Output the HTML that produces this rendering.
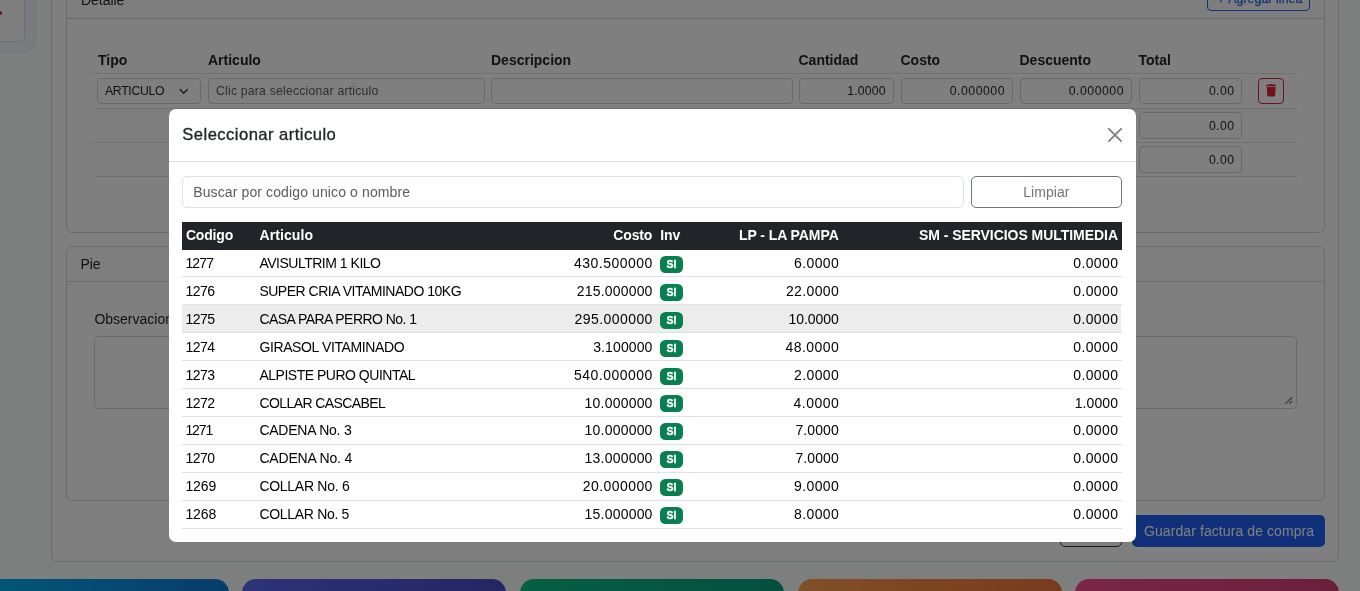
<!DOCTYPE html>
<html lang="es">
<head>
<meta charset="utf-8">
<title>Factura de compra</title>
<style>
*{box-sizing:border-box;margin:0;padding:0}
html,body{width:1360px;height:591px;overflow:hidden}
body{position:relative;font-family:"Liberation Sans",sans-serif;font-size:14px;color:#212529;background:#fbfdfc}
.abs{position:absolute}
.t{position:absolute;white-space:nowrap;line-height:1}
#page{will-change:transform;position:absolute;left:0;top:0;width:1360px;height:591px;overflow:hidden}
.card{position:absolute;background:#fff;border:1px solid #d5d7da;border-radius:6px}
.chead{position:absolute;left:0;right:0;top:0;border-bottom:1px solid #d5d7da;background:#fcfcfc}
.inp{position:absolute;height:26px;border:1px solid #ced4da;border-radius:4px;background:#fff}
.hl{position:absolute;height:1px;background:#dee2e6}
.tile{position:absolute;top:579px;height:40px;width:264px;border-radius:14px}
#ov{position:absolute;left:0;top:0;width:1360px;height:591px;background:rgba(0,0,0,.5)}
#modal{will-change:transform;position:absolute;left:0;top:0;width:1360px;height:591px}
#mbox{position:absolute;left:169px;top:109px;width:967px;height:433px;background:#fff;border-radius:7px}
.rb{position:absolute;left:182px;width:940px;height:1px;background:#dee2e6}
.bdg{position:absolute;left:660px;width:23px;height:17px;border-radius:5.5px;background:#087f50}
</style>
</head>
<body>
<div id="page">
<div class="abs" style="left:-40px;top:-40px;width:65px;height:82px;background:#fff;border:1px solid #c8dcfa;border-radius:5.5px;box-shadow:0 0 0 10px #f2f8ff,0 0 0 11px #e2e8fb"></div>
<div class="abs" style="left:-3px;top:10.8px;width:5.2px;height:4.2px;background:#de243c;border-radius:0 2.5px 2.5px 0"></div>
<div class="card" style="left:51px;top:-40px;width:1288px;height:601.5px"></div>
<div class="card" style="left:66px;top:-24px;width:1259px;height:257px;overflow:hidden"><div class="chead" style="height:42px"></div></div>
<div class="t" id="detalle" style="top:-7.35px;font-size:14px;letter-spacing:-0.049px;left:81px;"><span>Detalle</span></div>
<div class="abs" style="left:1207px;top:-16px;width:103px;height:26.5px;border:1px solid #2260f4;border-radius:4px"></div>
<div class="t" id="plus" style="top:-6.97px;font-size:12.25px;color:#2260f4;left:1217.3px;-webkit-text-stroke:0.25px #2260f4;"><span>+</span></div>
<div class="t" id="agregar" style="top:-7.07px;font-size:12.25px;color:#2260f4;letter-spacing:0.102px;left:1228.2px;-webkit-text-stroke:0.25px #2260f4;"><span>Agregar linea</span></div>
<div class="t" id="h_tipo" style="top:53.45px;font-size:14px;font-weight:bold;left:98px;"><span>Tipo</span></div>
<div class="t" id="h_art" style="top:53.45px;font-size:14px;font-weight:bold;left:208px;"><span>Articulo</span></div>
<div class="t" id="h_desc" style="top:53.45px;font-size:14px;font-weight:bold;left:491px;"><span>Descripcion</span></div>
<div class="t" id="h_cant" style="top:53.45px;font-size:14px;font-weight:bold;left:798.5px;"><span>Cantidad</span></div>
<div class="t" id="h_costo" style="top:53.45px;font-size:14px;font-weight:bold;left:900.5px;"><span>Costo</span></div>
<div class="t" id="h_dcto" style="top:53.45px;font-size:14px;font-weight:bold;left:1019.5px;"><span>Descuento</span></div>
<div class="t" id="h_total" style="top:53.45px;font-size:14px;font-weight:bold;left:1138.5px;"><span>Total</span></div>
<div class="hl" style="left:94px;width:1203px;top:73px"></div>
<div class="hl" style="left:94px;width:1203px;top:108px"></div>
<div class="hl" style="left:94px;width:1203px;top:142px"></div>
<div class="hl" style="left:94px;width:1203px;top:176px"></div>
<div class="inp" style="left:97px;top:78px;width:103.5px"><svg class="abs" style="left:79.5px;top:8.5px" width="12" height="7" viewBox="0 0 12 7"><path d="M2.1 1.5 L5.7 5.2 L9.3 1.5" fill="none" stroke="#343a40" stroke-width="1.4" stroke-linecap="round" stroke-linejoin="round"/></svg></div>
<div class="t" id="sel" style="top:85.03px;font-size:12.25px;letter-spacing:-0.310px;left:105px;"><span>ARTICULO</span></div>
<div class="inp" style="left:208px;top:78px;width:277px"></div>
<div class="t" id="clic" style="top:85.03px;font-size:12.25px;color:#595c5f;letter-spacing:0.196px;left:216px;"><span>Clic para seleccionar articulo</span></div>
<div class="inp" style="left:491px;top:78px;width:301.5px"></div>
<div class="inp" style="left:799px;top:78px;width:95px"></div>
<div class="t" id="n_cant" style="top:85.03px;font-size:12.25px;letter-spacing:0.166px;right:474.334px;"><span>1.0000</span></div>
<div class="inp" style="left:901px;top:78px;width:112px"></div>
<div class="t" id="n_costo" style="top:85.03px;font-size:12.25px;letter-spacing:0.529px;right:354.971px;"><span>0.000000</span></div>
<div class="inp" style="left:1020px;top:78px;width:112px"></div>
<div class="t" id="n_dcto" style="top:85.03px;font-size:12.25px;letter-spacing:0.529px;right:235.971px;"><span>0.000000</span></div>
<div class="inp" style="left:1139px;top:78px;width:103px;height:26px"></div>
<div class="t" id="n_tot0" style="top:85.03px;font-size:12.25px;letter-spacing:0.419px;right:125.581px;"><span>0.00</span></div>
<div class="inp" style="left:1139px;top:112px;width:103px;height:27px"></div>
<div class="t" id="n_tot1" style="top:120.03px;font-size:12.25px;letter-spacing:0.419px;right:125.581px;"><span>0.00</span></div>
<div class="inp" style="left:1139px;top:146px;width:103px;height:27px"></div>
<div class="t" id="n_tot2" style="top:154.03px;font-size:12.25px;letter-spacing:0.419px;right:125.581px;"><span>0.00</span></div>
<div class="abs" style="left:1258px;top:78px;width:26px;height:26px;border:1px solid #de243c;border-radius:4px"><svg class="abs" style="left:6.6px;top:5.2px" width="10.4" height="12.4" preserveAspectRatio="none" viewBox="0 0 448 512"><path fill="#de243c" d="M432 32H312l-9.4-18.7A24 24 0 0 0 281.1 0H166.8a23.72 23.72 0 0 0-21.4 13.3L136 32H16A16 16 0 0 0 0 48v32a16 16 0 0 0 16 16h416a16 16 0 0 0 16-16V48a16 16 0 0 0-16-16zM53.2 467a48 48 0 0 0 47.9 45h245.8a48 48 0 0 0 47.9-45L416 128H32z"/></svg></div>
<div class="card" style="left:66px;top:246px;width:1259px;height:255px;overflow:hidden"><div class="chead" style="height:35px"></div></div>
<div class="t" id="pie" style="top:256.85px;font-size:14px;left:80.4px;"><span>Pie</span></div>
<div class="t" id="obs" style="top:312.25px;font-size:14px;left:94.4px;"><span>Observaciones</span></div>
<div class="abs" style="left:94px;top:336px;width:1203px;height:73px;border:1px solid #d3d8de;border-radius:5px;background:#fff"><svg class="abs" style="left:1188px;top:57px" width="12" height="12" viewBox="0 0 12 12"><path d="M2.2 9.9 L9.1 3.2 M6.2 9.6 L9.1 7.2" stroke="#707070" stroke-width="1.25" fill="none"/></svg></div>
<div class="abs" style="left:1060px;top:515px;width:62px;height:32px;border:1px solid #343a40;border-radius:5px"></div>
<div class="abs" style="left:1132px;top:515px;width:193px;height:32px;background:#2260f4;border-radius:5px"></div>
<div class="t" id="guardar" style="top:523.95px;font-size:14px;color:#fff;letter-spacing:0.084px;left:1144px;"><span>Guardar factura de compra</span></div>
<div class="tile" style="left:-35px;background:linear-gradient(100deg,#04b4ee,#0e78d8)"></div>
<div class="tile" style="left:242.3px;background:linear-gradient(100deg,#5866f0,#4c4bc4)"></div>
<div class="tile" style="left:520px;background:linear-gradient(100deg,#0cc08c,#089e7c)"></div>
<div class="tile" style="left:797.6px;background:linear-gradient(100deg,#ffa04c,#f4743c)"></div>
<div class="tile" style="left:1075.4px;background:linear-gradient(100deg,#f84c8c,#d63e78)"></div>
</div>
<div id="ov"></div>
<div id="modal">
<div id="mbox"></div>
<div class="abs" style="left:169px;top:161px;width:967px;height:1px;background:#dee2e6"></div>
<div class="t" id="mtitle" style="top:126.55px;font-size:16.6px;letter-spacing:0.457px;left:182.3px;-webkit-text-stroke:0.32px #212529;"><span>Seleccionar articulo</span></div>
<svg class="abs" style="left:1108px;top:128px" width="14" height="14" viewBox="0 0 16 16"><path fill="#7f7f7f" d="M.293.293a1 1 0 0 1 1.414 0L8 6.586 14.293.293a1 1 0 1 1 1.414 1.414L9.414 8l6.293 6.293a1 1 0 0 1-1.414 1.414L8 9.414l-6.293 6.293a1 1 0 0 1-1.414-1.414L6.586 8 .293 1.707a1 1 0 0 1 0-1.414z"/></svg>
<div class="abs" style="left:182px;top:176px;width:782px;height:32px;border:1px solid #dee2e6;border-radius:5px"></div>
<div class="t" id="ph" style="top:184.90px;font-size:14px;color:#595c5f;letter-spacing:0.115px;left:193.25px;"><span>Buscar por codigo unico o nombre</span></div>
<div class="abs" style="left:971px;top:176px;width:151px;height:32px;border:1px solid #6c757d;border-radius:5px"></div>
<div class="t" id="limpiar" style="top:184.90px;font-size:14px;color:#6c757d;letter-spacing:0.066px;left:846.333px;width:400px;text-align:center;"><span>Limpiar</span></div>
<div class="abs" style="left:182px;top:222px;width:940px;height:28px;background:#212529"></div>
<div class="t" id="th1" style="top:228.25px;font-size:14px;font-weight:bold;color:#fff;letter-spacing:-0.164px;left:185.9px;"><span>Codigo</span></div>
<div class="t" id="th2" style="top:228.25px;font-size:14px;font-weight:bold;color:#fff;letter-spacing:0.073px;left:259.6px;"><span>Articulo</span></div>
<div class="t" id="th3" style="top:228.25px;font-size:14px;font-weight:bold;color:#fff;letter-spacing:-0.143px;right:707.743px;"><span>Costo</span></div>
<div class="t" id="th4" style="top:228.25px;font-size:14px;font-weight:bold;color:#fff;letter-spacing:-0.067px;left:660.3px;"><span>Inv</span></div>
<div class="t" id="th5" style="top:228.25px;font-size:14px;font-weight:bold;color:#fff;letter-spacing:-0.066px;right:521.266px;"><span>LP - LA PAMPA</span></div>
<div class="t" id="th6" style="top:228.25px;font-size:14px;font-weight:bold;color:#fff;letter-spacing:-0.044px;right:242.044px;"><span>SM - SERVICIOS MULTIMEDIA</span></div>
<div class="t" id="r0c1" style="top:256.15px;font-size:14px;color:#000;letter-spacing:-0.819px;left:185.4px;"><span>1277</span></div>
<div class="t" id="r0c2" style="top:256.15px;font-size:14px;color:#000;letter-spacing:-0.488px;left:259.4px;"><span>AVISULTRIM 1 KILO</span></div>
<div class="t" id="r0c3" style="top:256.15px;font-size:14px;color:#000;letter-spacing:0.503px;right:707.097px;"><span>430.500000</span></div>
<div class="bdg" style="top:256px"></div>
<div class="t" id="r0c4" style="top:258.71px;font-size:10.5px;font-weight:bold;color:#fff;left:471.500px;width:400px;text-align:center;-webkit-text-stroke:0.3px #fff;"><span>SI</span></div>
<div class="t" id="r0c5" style="top:256.15px;font-size:14px;color:#000;letter-spacing:0.394px;right:520.806px;"><span>6.0000</span></div>
<div class="t" id="r0c6" style="top:256.15px;font-size:14px;color:#000;letter-spacing:0.394px;right:241.606px;"><span>0.0000</span></div>
<div class="rb" style="top:276px"></div>
<div class="t" id="r1c1" style="top:284.15px;font-size:14px;color:#000;letter-spacing:-0.519px;left:185.4px;"><span>1276</span></div>
<div class="t" id="r1c2" style="top:284.15px;font-size:14px;color:#000;letter-spacing:-0.491px;left:259.4px;"><span>SUPER CRIA VITAMINADO 10KG</span></div>
<div class="t" id="r1c3" style="top:284.15px;font-size:14px;color:#000;letter-spacing:0.181px;right:707.419px;"><span>215.000000</span></div>
<div class="bdg" style="top:284px"></div>
<div class="t" id="r1c4" style="top:286.71px;font-size:10.5px;font-weight:bold;color:#fff;left:471.500px;width:400px;text-align:center;-webkit-text-stroke:0.3px #fff;"><span>SI</span></div>
<div class="t" id="r1c5" style="top:284.15px;font-size:14px;color:#000;letter-spacing:0.382px;right:520.818px;"><span>22.0000</span></div>
<div class="t" id="r1c6" style="top:284.15px;font-size:14px;color:#000;letter-spacing:0.394px;right:241.606px;"><span>0.0000</span></div>
<div class="rb" style="top:304px"></div>
<div class="abs" style="left:182px;top:305px;width:939px;height:27px;background:#ececec"></div>
<div class="t" id="r2c1" style="top:312.15px;font-size:14px;color:#000;letter-spacing:-0.519px;left:185.4px;"><span>1275</span></div>
<div class="t" id="r2c2" style="top:312.15px;font-size:14px;color:#000;letter-spacing:-0.550px;left:259.4px;"><span>CASA PARA PERRO No. 1</span></div>
<div class="t" id="r2c3" style="top:312.15px;font-size:14px;color:#000;letter-spacing:0.437px;right:707.163px;"><span>295.000000</span></div>
<div class="bdg" style="top:312px"></div>
<div class="t" id="r2c4" style="top:314.71px;font-size:10.5px;font-weight:bold;color:#fff;left:471.500px;width:400px;text-align:center;-webkit-text-stroke:0.3px #fff;"><span>SI</span></div>
<div class="t" id="r2c5" style="top:312.15px;font-size:14px;color:#000;letter-spacing:-0.052px;right:521.252px;"><span>10.0000</span></div>
<div class="t" id="r2c6" style="top:312.15px;font-size:14px;color:#000;letter-spacing:0.394px;right:241.606px;"><span>0.0000</span></div>
<div class="rb" style="top:332px"></div>
<div class="t" id="r3c1" style="top:340.15px;font-size:14px;color:#000;letter-spacing:-0.519px;left:185.4px;"><span>1274</span></div>
<div class="t" id="r3c2" style="top:340.15px;font-size:14px;color:#000;letter-spacing:-0.383px;left:259.4px;"><span>GIRASOL VITAMINADO</span></div>
<div class="t" id="r3c3" style="top:340.15px;font-size:14px;color:#000;letter-spacing:0.113px;right:707.487px;"><span>3.100000</span></div>
<div class="bdg" style="top:340px"></div>
<div class="t" id="r3c4" style="top:342.71px;font-size:10.5px;font-weight:bold;color:#fff;left:471.500px;width:400px;text-align:center;-webkit-text-stroke:0.3px #fff;"><span>SI</span></div>
<div class="t" id="r3c5" style="top:340.15px;font-size:14px;color:#000;letter-spacing:0.465px;right:520.735px;"><span>48.0000</span></div>
<div class="t" id="r3c6" style="top:340.15px;font-size:14px;color:#000;letter-spacing:0.394px;right:241.606px;"><span>0.0000</span></div>
<div class="rb" style="top:360px"></div>
<div class="t" id="r4c1" style="top:368.15px;font-size:14px;color:#000;letter-spacing:-0.519px;left:185.4px;"><span>1273</span></div>
<div class="t" id="r4c2" style="top:368.15px;font-size:14px;color:#000;letter-spacing:-0.487px;left:259.4px;"><span>ALPISTE PURO QUINTAL</span></div>
<div class="t" id="r4c3" style="top:368.15px;font-size:14px;color:#000;letter-spacing:0.503px;right:707.097px;"><span>540.000000</span></div>
<div class="bdg" style="top:368px"></div>
<div class="t" id="r4c4" style="top:370.71px;font-size:10.5px;font-weight:bold;color:#fff;left:471.500px;width:400px;text-align:center;-webkit-text-stroke:0.3px #fff;"><span>SI</span></div>
<div class="t" id="r4c5" style="top:368.15px;font-size:14px;color:#000;letter-spacing:0.394px;right:520.806px;"><span>2.0000</span></div>
<div class="t" id="r4c6" style="top:368.15px;font-size:14px;color:#000;letter-spacing:0.394px;right:241.606px;"><span>0.0000</span></div>
<div class="rb" style="top:388px"></div>
<div class="t" id="r5c1" style="top:396.15px;font-size:14px;color:#000;letter-spacing:-0.519px;left:185.4px;"><span>1272</span></div>
<div class="t" id="r5c2" style="top:396.15px;font-size:14px;color:#000;letter-spacing:-0.579px;left:259.4px;"><span>COLLAR CASCABEL</span></div>
<div class="t" id="r5c3" style="top:396.15px;font-size:14px;color:#000;letter-spacing:0.202px;right:707.398px;"><span>10.000000</span></div>
<div class="bdg" style="top:395px"></div>
<div class="t" id="r5c4" style="top:397.71px;font-size:10.5px;font-weight:bold;color:#fff;left:471.500px;width:400px;text-align:center;-webkit-text-stroke:0.3px #fff;"><span>SI</span></div>
<div class="t" id="r5c5" style="top:396.15px;font-size:14px;color:#000;letter-spacing:0.514px;right:520.686px;"><span>4.0000</span></div>
<div class="t" id="r5c6" style="top:396.15px;font-size:14px;color:#000;letter-spacing:0.094px;right:241.906px;"><span>1.0000</span></div>
<div class="rb" style="top:416px"></div>
<div class="t" id="r6c1" style="top:423.15px;font-size:14px;color:#000;letter-spacing:-1.119px;left:185.4px;"><span>1271</span></div>
<div class="t" id="r6c2" style="top:423.15px;font-size:14px;color:#000;letter-spacing:-0.240px;left:259.4px;"><span>CADENA No. 3</span></div>
<div class="t" id="r6c3" style="top:423.15px;font-size:14px;color:#000;letter-spacing:0.202px;right:707.398px;"><span>10.000000</span></div>
<div class="bdg" style="top:423px"></div>
<div class="t" id="r6c4" style="top:425.71px;font-size:10.5px;font-weight:bold;color:#fff;left:471.500px;width:400px;text-align:center;-webkit-text-stroke:0.3px #fff;"><span>SI</span></div>
<div class="t" id="r6c5" style="top:423.15px;font-size:14px;color:#000;letter-spacing:0.114px;right:521.086px;"><span>7.0000</span></div>
<div class="t" id="r6c6" style="top:423.15px;font-size:14px;color:#000;letter-spacing:0.394px;right:241.606px;"><span>0.0000</span></div>
<div class="rb" style="top:444px"></div>
<div class="t" id="r7c1" style="top:451.15px;font-size:14px;color:#000;letter-spacing:-0.519px;left:185.4px;"><span>1270</span></div>
<div class="t" id="r7c2" style="top:451.15px;font-size:14px;color:#000;letter-spacing:-0.185px;left:259.4px;"><span>CADENA No. 4</span></div>
<div class="t" id="r7c3" style="top:451.15px;font-size:14px;color:#000;letter-spacing:0.202px;right:707.398px;"><span>13.000000</span></div>
<div class="bdg" style="top:451px"></div>
<div class="t" id="r7c4" style="top:453.71px;font-size:10.5px;font-weight:bold;color:#fff;left:471.500px;width:400px;text-align:center;-webkit-text-stroke:0.3px #fff;"><span>SI</span></div>
<div class="t" id="r7c5" style="top:451.15px;font-size:14px;color:#000;letter-spacing:0.114px;right:521.086px;"><span>7.0000</span></div>
<div class="t" id="r7c6" style="top:451.15px;font-size:14px;color:#000;letter-spacing:0.394px;right:241.606px;"><span>0.0000</span></div>
<div class="rb" style="top:472px"></div>
<div class="t" id="r8c1" style="top:479.15px;font-size:14px;color:#000;letter-spacing:-0.052px;left:185.4px;"><span>1269</span></div>
<div class="t" id="r8c2" style="top:479.15px;font-size:14px;color:#000;letter-spacing:-0.280px;left:259.4px;"><span>COLLAR No. 6</span></div>
<div class="t" id="r8c3" style="top:479.15px;font-size:14px;color:#000;letter-spacing:0.427px;right:707.173px;"><span>20.000000</span></div>
<div class="bdg" style="top:479px"></div>
<div class="t" id="r8c4" style="top:481.71px;font-size:10.5px;font-weight:bold;color:#fff;left:471.500px;width:400px;text-align:center;-webkit-text-stroke:0.3px #fff;"><span>SI</span></div>
<div class="t" id="r8c5" style="top:479.15px;font-size:14px;color:#000;letter-spacing:0.394px;right:520.806px;"><span>9.0000</span></div>
<div class="t" id="r8c6" style="top:479.15px;font-size:14px;color:#000;letter-spacing:0.394px;right:241.606px;"><span>0.0000</span></div>
<div class="rb" style="top:500px"></div>
<div class="t" id="r9c1" style="top:507.15px;font-size:14px;color:#000;letter-spacing:-0.052px;left:185.4px;"><span>1268</span></div>
<div class="t" id="r9c2" style="top:507.15px;font-size:14px;color:#000;letter-spacing:-0.307px;left:259.4px;"><span>COLLAR No. 5</span></div>
<div class="t" id="r9c3" style="top:507.15px;font-size:14px;color:#000;letter-spacing:0.202px;right:707.398px;"><span>15.000000</span></div>
<div class="bdg" style="top:507px"></div>
<div class="t" id="r9c4" style="top:509.71px;font-size:10.5px;font-weight:bold;color:#fff;left:471.500px;width:400px;text-align:center;-webkit-text-stroke:0.3px #fff;"><span>SI</span></div>
<div class="t" id="r9c5" style="top:507.15px;font-size:14px;color:#000;letter-spacing:0.394px;right:520.806px;"><span>8.0000</span></div>
<div class="t" id="r9c6" style="top:507.15px;font-size:14px;color:#000;letter-spacing:0.394px;right:241.606px;"><span>0.0000</span></div>
<div class="rb" style="top:528px"></div>
</div>
</body>
</html>
